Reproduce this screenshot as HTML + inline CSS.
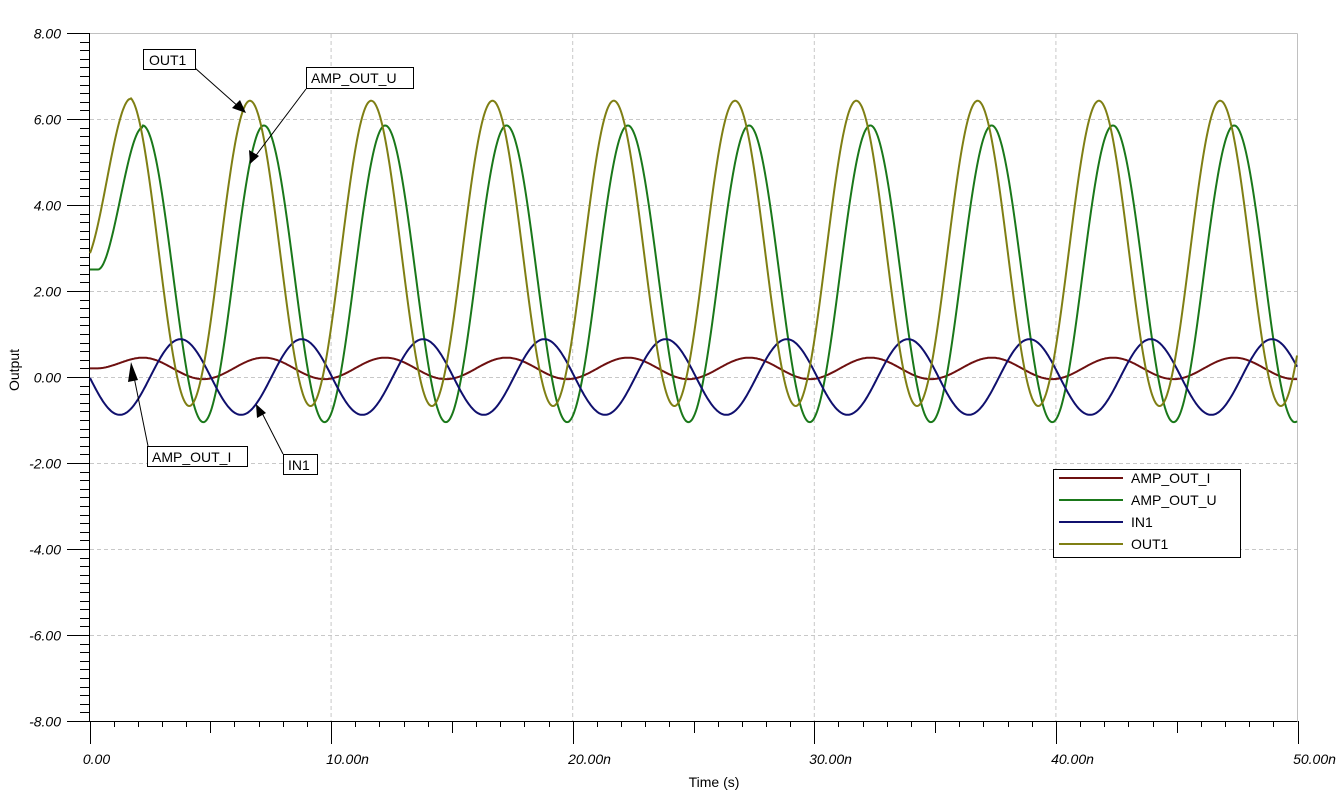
<!DOCTYPE html>
<html><head><meta charset="utf-8"><style>
body{margin:0;background:#fff;width:1339px;height:801px;overflow:hidden}
svg{display:block;font-family:"Liberation Sans",Arial,sans-serif}
</style></head><body>
<svg id="s" width="1339" height="801" viewBox="0 0 1339 801" xmlns="http://www.w3.org/2000/svg">
<rect width="1339" height="801" fill="#fff"/>
<g id="grid" stroke="#c8c8c8" stroke-width="1" stroke-dasharray="4,3"></g>
<line x1="89.5" y1="33.5" x2="1297.5" y2="33.5" stroke="#c0c0c0"/>
<line x1="1297.5" y1="33.5" x2="1297.5" y2="721" stroke="#c0c0c0"/>
<g id="axes" stroke="#000" stroke-width="1"></g>
<g id="lbl" font-size="14" font-style="italic" fill="#000"></g>
<g id="curves" fill="none" stroke-width="2"></g>
<text x="19" y="370" font-size="14" text-anchor="middle" transform="rotate(-90 19 370)">Output</text>
<text x="714" y="787" font-size="14" text-anchor="middle">Time (s)</text>
<g stroke="#000" stroke-width="1">
<line x1="195" y1="68" x2="240" y2="108"/>
<line x1="306" y1="89" x2="254" y2="158"/>
<line x1="148" y1="446" x2="133" y2="372"/>
<line x1="283" y1="454" x2="261" y2="411"/>
</g>
<g fill="#000">
<polygon points="246,113 232,108 240,100"/>
<polygon points="250,164 249,150 259,156"/>
<polygon points="131,362 128,382 138,380"/>
<polygon points="256,404 257,418 266,413"/>
</g>
<g font-size="14" fill="#000">
<rect x="143.5" y="49.5" width="52" height="20" fill="#fff" stroke="#000"/><text x="149" y="65">OUT1</text>
<rect x="306.5" y="67.5" width="107" height="21" fill="#fff" stroke="#000"/><text x="311" y="83">AMP_OUT_U</text>
<rect x="147.5" y="446.5" width="100" height="20" fill="#fff" stroke="#000"/><text x="152" y="462">AMP_OUT_I</text>
<rect x="283.5" y="454.5" width="34" height="20" fill="#fff" stroke="#000"/><text x="288" y="470">IN1</text>
<rect x="1053.5" y="469.5" width="187" height="88" fill="#fff" stroke="#000"/>
<line x1="1059" y1="478" x2="1123" y2="478" stroke="#6e1010" stroke-width="2"/><text x="1131" y="483">AMP_OUT_I</text>
<line x1="1059" y1="500" x2="1123" y2="500" stroke="#1a781a" stroke-width="2"/><text x="1131" y="505">AMP_OUT_U</text>
<line x1="1059" y1="522" x2="1123" y2="522" stroke="#10106e" stroke-width="2"/><text x="1131" y="527">IN1</text>
<line x1="1059" y1="544" x2="1123" y2="544" stroke="#7f7f14" stroke-width="2"/><text x="1131" y="549">OUT1</text>
</g>
</svg>
<script>
var NS="http://www.w3.org/2000/svg";
function el(p,t,a){var e=document.createElementNS(NS,t);for(var k in a)e.setAttribute(k,a[k]);document.getElementById(p).appendChild(e);return e;}
var X0=89.5,X1=1297.5,Y0=377,PY=43;
function X(t){return X0+(X1-X0)*t/50;}
function Y(v){return Y0-v*PY;}
for(var i=1;i<5;i++){var x=X(i*10);el("grid","line",{x1:x,y1:34,x2:x,y2:721});}
for(var v=-6;v<=6;v+=2){var y=Y(v)+0.5;el("grid","line",{x1:90,y1:y,x2:1297,y2:y});}
el("axes","line",{x1:X0,y1:33,x2:X0,y2:721});
el("axes","line",{x1:X0,y1:721.5,x2:X1,y2:721.5});
for(var k=0;k<=80;k++){var v=8-k*0.2,y=Math.round(Y(v))+0.5;
 if(k%10==0){el("axes","line",{x1:67,y1:y,x2:X0,y2:y});
  var t=el("lbl","text",{x:61,y:y+5,"text-anchor":"end"});t.textContent=v.toFixed(2);}
 else el("axes","line",{x1:80,y1:y,x2:X0,y2:y});}
for(var k=0;k<=50;k++){var x=Math.round(X(k))+0.5;
 if(k%10==0){el("axes","line",{x1:x,y1:721,x2:x,y2:744});
  var t=el("lbl","text",{x:x+(k==0?6:16),y:764,"text-anchor":"middle"});t.textContent=k==0?"0.00":(k.toFixed(0)+".00n");}
 else el("axes","line",{x1:x,y1:721,x2:x,y2:k%5==0?733:727});}
var P=5.02,W=2*Math.PI/P;
function sm(t,T){if(t>=T)return 1;if(t<=0)return 0;var u=t/T;return u*u*(3-2*u);}
function es(t,T){if(t>=T)return 1;if(t<=0)return 0;return Math.sin(Math.PI/2*t/T);}
var sig=[
 {c:"#6e1010",f:function(t){if(t<2.2)return 0.2+0.25*sm(t-0.3,1.9);return 0.2+0.25*Math.cos(W*(t-2.2));}},
 {c:"#1a781a",f:function(t){if(t<2.2)return 2.5+3.3*sm(t-0.35,1.85);return 2.4+3.45*Math.cos(W*(t-2.2));}},
 {c:"#10106e",f:function(t){return -0.88*Math.sin(W*t);}},
 {c:"#7f7f14",f:function(t){if(t<1.7)return 2.85+3.62*(0.4*es(t,1.7)+0.6*sm(t,1.7));var s=2.875+3.55*Math.cos(W*(t-1.62));return s+0.08*Math.exp(-Math.pow((t-1.7)/0.6,2));}}
];
sig.forEach(function(g){var pts=[];for(var x=90;x<=1297;x+=1){var t=(x-X0)*50/(X1-X0);pts.push(x+","+Y(g.f(t)).toFixed(1));}
 el("curves","polyline",{points:pts.join(" "),stroke:g.c});});
</script>
</body></html>
